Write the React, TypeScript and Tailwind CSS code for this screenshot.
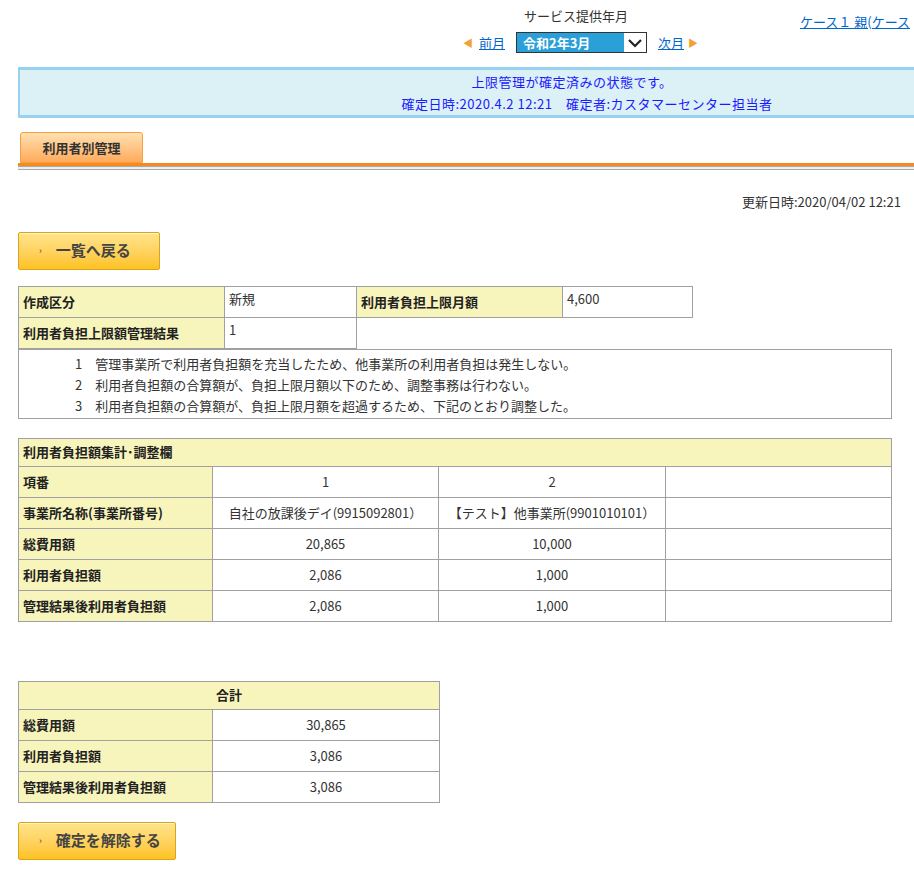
import React from "react";

const thBase = "bg-[#f7f5bb] border border-[#a0a0a0] font-bold px-[4px] text-[13px] text-[#222]";
const th = `${thBase} text-left`;
const td = "bg-white border border-[#a0a0a0] px-[4px] text-[13px] text-[#333] font-normal";

function Btn({ label, w }: { label: string; w: string }) {
  return (
    <div className={`${w} h-[38px] flex items-center rounded-[2px] border border-[#d9a520] bg-gradient-to-b from-[#ffe48a] to-[#ffc21a] shadow-[inset_0_1px_0_#fff3c0]`}>
      <span className="ml-[20px] text-[9px] text-[#444]">›</span>
      <span className="ml-[14px] font-bold text-[15px] text-[#444]">{label}</span>
    </div>
  );
}

export default function App() {
  return (
    <div className="w-[914px] h-[877px] overflow-hidden bg-white text-[13px] text-[#333] relative" style={{ fontFamily: '"Noto Sans CJK JP", "Noto Sans", sans-serif' }}>
      <div className="h-[67px] relative">
        <div className="absolute left-[524px] top-[6px] text-[13px] text-[#333]">サービス提供年月</div>
        <div className="absolute left-[800px] top-[12px] text-[13px] text-[#0066cc] underline whitespace-nowrap">ケース１ 親(ケース</div>
        <div className="absolute left-[463px] top-[32px] flex items-center">
          <span className="text-[#f5a030] text-[10px]">◀</span>
          <span className="ml-[6px] text-[#0066cc] underline">前月</span>
          <div className="ml-[11px] w-[131px] h-[21px] border border-[#333] flex">
            <div className="bg-[#2a9fd8] text-white font-bold text-[13px] flex-1 px-[6px] leading-[19px]">令和2年3月</div>
            <div className="w-[22px] flex items-center justify-center">
              <svg width="14" height="10" viewBox="0 0 14 10"><path d="M1 2l6 6 6-6" stroke="#222" strokeWidth="2.2" fill="none" /></svg>
            </div>
          </div>
          <span className="ml-[11px] text-[#0066cc] underline">次月</span>
          <span className="ml-[4px] text-[#f5a030] text-[10px]">▶</span>
        </div>
      </div>
      <div className="ml-[18px] h-[51px] bg-[#dcf1f6] border-y-[3px] border-[#99d2f0] border-l-[2px] pl-[240px] flex flex-col items-center justify-center text-[#1a1aff] text-[13px] leading-[22px] tracking-[0.5px]">
        <div className="-ml-[30px]">上限管理が確定済みの状態です。</div>
        <div>確定日時:2020.4.2 12:21　確定者:カスタマーセンター担当者</div>
      </div>
      <div className="mt-[14px] ml-[18px]">
        <div className="ml-[2px] w-[123px] h-[31px] rounded-t-[3px] border border-[#f7a040] bg-gradient-to-b from-[#ffe0b0] to-[#ffab5a] flex items-center justify-center font-bold text-[13px] text-[#333]">利用者別管理</div>
        <div className="h-[3px] bg-[#f58a1e]" />
        <div className="h-[4px] bg-[#eee] border-y border-[#aaa]" />
      </div>
      <div className="mt-[22px] ml-[742px] whitespace-nowrap text-[13px]">更新日時:2020/04/02 12:21</div>
      <div className="mt-[20px] ml-[18px]"><Btn label="一覧へ戻る" w="w-[142px]" /></div>
      <div className="mt-[16px] ml-[18px] w-[874px]">
        <table className="border-collapse w-[675px]">
          <tbody>
            <tr className="h-[31px]">
              <th className={`${th} w-[206px]`}>作成区分</th>
              <td className={`${td} w-[132px] align-top pt-[2px]`}>新規</td>
              <th className={`${th} w-[206px]`}>利用者負担上限月額</th>
              <td className={`${td} align-top pt-[2px]`}>4,600</td>
            </tr>
            <tr className="h-[31px]">
              <th className={th}>利用者負担上限額管理結果</th>
              <td className={`${td} align-top pt-[2px]`}>1</td>
              <td className="border-l border-[#a0a0a0]" colSpan={2}></td>
            </tr>
          </tbody>
        </table>
        <div className="border border-[#a0a0a0] h-[70px] pl-[56px] pt-[3px] text-[13px] leading-[21px] text-[#333]">
          <div>1　管理事業所で利用者負担額を充当したため、他事業所の利用者負担は発生しない。</div>
          <div>2　利用者負担額の合算額が、負担上限月額以下のため、調整事務は行わない。</div>
          <div>3　利用者負担額の合算額が、負担上限月額を超過するため、下記のとおり調整した。</div>
        </div>
        <table className="border-collapse w-[874px] mt-[19px]">
          <tbody>
            <tr className="h-[28px]"><th className={th} colSpan={4}>利用者負担額集計･調整欄</th></tr>
            {[
              ["項番", "1", "2"],
              ["事業所名称(事業所番号)", "自社の放課後デイ(9915092801）", "【テスト】他事業所(9901010101）"],
              ["総費用額", "20,865", "10,000"],
              ["利用者負担額", "2,086", "1,000"],
              ["管理結果後利用者負担額", "2,086", "1,000"],
            ].map((r) => (
              <tr key={r[0]} className="h-[31px]">
                <th className={`${th} w-[194px]`}>{r[0]}</th>
                <td className={`${td} text-center w-[226px]`}>{r[1]}</td>
                <td className={`${td} text-center w-[227px]`}>{r[2]}</td>
                <td className={td}></td>
              </tr>
            ))}
          </tbody>
        </table>
        <table className="border-collapse w-[422px] mt-[59px]">
          <tbody>
            <tr className="h-[28px]"><th className={`${thBase} text-center`} colSpan={2}>合計</th></tr>
            {[["総費用額", "30,865"], ["利用者負担額", "3,086"], ["管理結果後利用者負担額", "3,086"]].map((r) => (
              <tr key={r[0]} className="h-[31px]">
                <th className={`${th} w-[194px]`}>{r[0]}</th>
                <td className={`${td} text-center`}>{r[1]}</td>
              </tr>
            ))}
          </tbody>
        </table>
      </div>
      <div className="mt-[19px] ml-[18px]"><Btn label="確定を解除する" w="w-[158px]" /></div>
    </div>
  );
}
